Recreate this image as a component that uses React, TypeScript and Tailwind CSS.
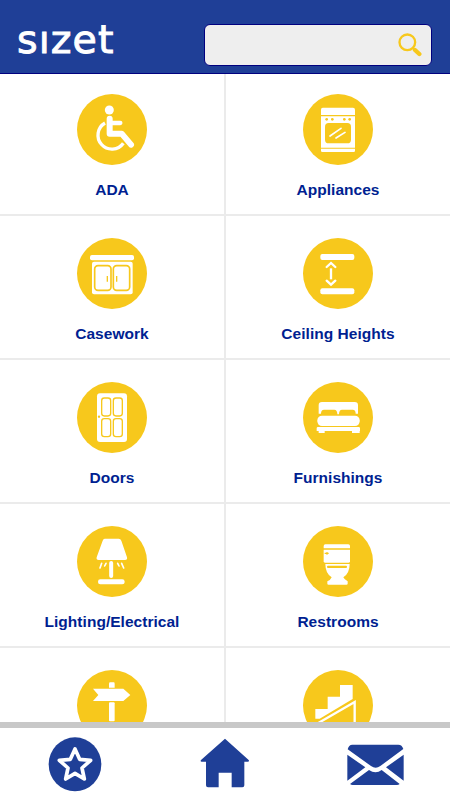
import type { ReactNode } from 'react';

type Category = {
  id: string;
  label?: string;
  icon: ReactNode;
};

const categories: Category[] = [
  {
    id: 'ada',
    label: 'ADA',
    icon: (
      <>
        <circle cx="142" cy="78" r="13.5" fill="#fff" />
        <path d="M143 104v45h36l28 33" fill="none" stroke="#fff" strokeWidth="18" strokeLinecap="round" strokeLinejoin="round" />
        <path d="M145 117h30" stroke="#fff" strokeWidth="13" strokeLinecap="round" />
        <path d="M129 117a42 42 0 1 0 55 61" fill="none" stroke="#fff" strokeWidth="10" />
      </>
    ),
  },
  {
    id: 'appliances',
    label: 'Appliances',
    icon: (
      <>
        <path d="M104 71h91q6 0 6 6v16H99V77q0-6 5-6z" fill="#fff" />
        <path d="M99 97h102v94H99z" fill="#fff" />
        <path d="M99 194h102v6q0 4-4 4h-94q-4 0-4-4z" fill="#fff" />
        <rect x="111" y="117" width="78" height="61" rx="11" fill="#f7c81c" />
        <g fill="#f7c81c">
          <circle cx="116" cy="106" r="4" />
          <circle cx="133" cy="106" r="4" />
          <circle cx="169" cy="106" r="4" />
          <circle cx="185" cy="106" r="4" />
        </g>
        <path d="M126 156l33-23M144 162l27-17" stroke="#fff" strokeWidth="5" strokeLinecap="round" />
      </>
    ),
  },
  {
    id: 'casework',
    label: 'Casework',
    icon: (
      <>
        <rect x="84" y="81" width="132" height="16" rx="6" fill="#fff" />
        <rect x="90" y="101" width="122" height="98" rx="6" fill="#fff" />
        <g fill="none" stroke="#f7c81c" strokeWidth="5">
          <rect x="98" y="113" width="49" height="74" rx="10" />
          <rect x="154" y="113" width="49" height="74" rx="10" />
        </g>
        <path d="M136 144v17M164 144v17" stroke="#f7c81c" strokeWidth="4" />
      </>
    ),
  },
  {
    id: 'ceiling-heights',
    label: 'Ceiling Heights',
    icon: (
      <>
        <rect x="97" y="78" width="102" height="18" rx="6" fill="#fff" />
        <rect x="97" y="181" width="102" height="18" rx="6" fill="#fff" />
        <path d="M129 121v33" stroke="#fff" strokeWidth="7" />
        <path d="M116 117l13-12 13 12M116 158l13 12 13-12" fill="none" stroke="#fff" strokeWidth="7" strokeLinecap="round" />
      </>
    ),
  },
  {
    id: 'doors',
    label: 'Doors',
    icon: (
      <>
        <rect x="105" y="64" width="90" height="146" rx="9" fill="#fff" />
        <g fill="none" stroke="#f7c81c" strokeWidth="4">
          <rect x="119" y="78" width="27" height="54" rx="8" />
          <rect x="154" y="78" width="27" height="54" rx="8" />
          <rect x="119" y="140" width="27" height="54" rx="8" />
          <rect x="154" y="140" width="27" height="54" rx="8" />
        </g>
        <circle cx="111" cy="134" r="3.5" fill="#f7c81c" />
      </>
    ),
  },
  {
    id: 'furnishings',
    label: 'Furnishings',
    icon: (
      <>
        <path
          d="M102 90h98q10 0 10 10v25h-7q0-12-9-12h-32q-9 0-9 14h-5q0-14-9-14h-31q-9 0-9 12h-7v-25q0-10 10-10z"
          fill="#fff"
        />
        <rect x="88" y="131" width="127" height="31" rx="14" fill="#fff" />
        <path d="M90 165h122q4 0 4 4v8h-1v6h-23v-6h-82v6H92v-6h-6v-8q0-4 4-4z" fill="#fff" />
      </>
    ),
  },
  {
    id: 'lighting',
    label: 'Lighting/Electrical',
    icon: (
      <>
        <path d="M128 68h42q6 0 8 6l17 50q2 8-6 8h-79q-8 0-6-8l18-50q2-6 6-6z" fill="#fff" />
        <path d="M147.5 141v39" stroke="#fff" strokeWidth="12" strokeLinecap="round" />
        <path d="M119 142l-5 14M132 142l-4 8M167 142l4 8M179 142l6 14" stroke="#fff" strokeWidth="5" strokeLinecap="round" />
        <rect x="108" y="190" width="80" height="15" rx="7" fill="#fff" />
      </>
    ),
  },
  {
    id: 'restrooms',
    label: 'Restrooms',
    icon: (
      <>
        <path d="M112 85h69q5 0 5 5v7h-79v-7q0-5 5-5z" fill="#fff" />
        <path d="M107 101h79v35q0 4-4 4h-71q-4 0-4-4z" fill="#fff" />
        <path d="M112 144h73q0 28-19 40 3 7 13 12v7q0 3-4 3h-53q-4 0-4-3v-7q10-4 13-12-19-12-19-40z" fill="#fff" />
        <rect x="117" y="149" width="60" height="7" rx="3" fill="#f7c81c" />
        <path d="M110 112h12M117 108v8" stroke="#f7c81c" strokeWidth="3.5" />
      </>
    ),
  },
  {
    id: 'signage',
    icon: (
      <>
        <path d="M145 67h10q3 0 3 4v12h-17V71q0-4 4-4z" fill="#fff" />
        <path d="M93 86h91l21 19-21 18H93l16-18z" fill="#fff" />
        <rect x="141" y="127" width="17" height="57" rx="3" fill="#fff" />
      </>
    ),
  },
  {
    id: 'stairs',
    icon: (
      <>
        <path d="M82 147h37v-37h37V75h38v42L95 176H82z" fill="#fff" />
        <path d="M86 192l114-66v90" fill="none" stroke="#fff" strokeWidth="7" />
      </>
    ),
  },
];

function CategoryCell({ id, label, icon }: Category) {
  return (
    <button
      type="button"
      aria-label={label ?? id}
      className="flex h-36 flex-col items-center border-b-2 border-[#ebebeb] pt-[22px] odd:border-r-2"
    >
      <svg width="70" height="71" viewBox="45 30 210 213" className="block shrink-0">
        <ellipse cx="150" cy="136.5" rx="105" ry="106.5" fill="#f7c81c" />
        {icon}
      </svg>
      {label && (
        <span className="mt-[15px] text-[15.5px] leading-5 font-bold tracking-[0.03px] whitespace-nowrap text-[#001f91]">
          {label}
        </span>
      )}
    </button>
  );
}

function Header() {
  return (
    <header className="flex h-[74px] shrink-0 items-start justify-between border-b border-[#00007f] bg-[#1f3f97] pr-[18px] pl-[17px]">
      <h1 className="mt-4 font-['DejaVu_Sans',sans-serif] text-[39.5px] leading-[47px] tracking-[1.1px] text-white [-webkit-text-stroke:0.9px_white]">
        sızet
      </h1>
      <label className="mt-6 flex h-[42px] w-[228px] items-center rounded-md border border-[#00007f] bg-[#eeeeee]">
        <input type="text" aria-label="Search" className="min-w-0 flex-1 bg-transparent px-3 outline-none" />
        <svg width="24" height="24" viewBox="0 0 72 72" className="mr-[9px] shrink-0">
          <circle cx="28" cy="28" r="23.5" fill="none" stroke="#f7c81c" strokeWidth="7" />
          <path d="M51 51l13 12" stroke="#f7c81c" strokeWidth="13" strokeLinecap="round" />
          <path d="M45 45l7 7" stroke="#f7c81c" strokeWidth="3" />
        </svg>
      </label>
    </header>
  );
}

function BottomNav() {
  return (
    <nav className="flex h-[78px] shrink-0 items-start border-t-6 border-[#c8c8c8] bg-white">
      <button type="button" aria-label="Favorites" className="flex w-[150px] justify-center pt-[9px]">
        <svg width="54" height="55" viewBox="0 0 162 165">
          <ellipse cx="81" cy="82" rx="79" ry="81" fill="#1f3f97" />
          <path
            d="M81 36l14 31 33 3-26 23 7 33-28-17-28 17 7-33-26-23 33-3z"
            fill="none"
            stroke="#fff"
            strokeWidth="11"
            strokeLinejoin="round"
          />
        </svg>
      </button>
      <button type="button" aria-label="Home" className="flex w-[150px] justify-center pt-[9px]">
        <svg width="50" height="52" viewBox="0 0 150 156">
          <path
            d="M75 5l71 64q3 5-3 5h-10v71q0 6-6 6H95v-44H56v44H24q-6 0-6-6V74H5q-5 0-2-5z"
            fill="#1f3f97"
          />
        </svg>
      </button>
      <button type="button" aria-label="Mail" className="flex w-[150px] justify-center pt-4">
        <svg width="58" height="42" viewBox="0 0 174 126">
          <path d="M5 16Q8 2 19 2h138q11 0 15 13l-69 51q-14 10-28 0z" fill="#1f3f97" />
          <path
            d="M4 32l54 38-54 40zM173 32l-53 38 53 40zM12 120l57-42q20 14 38 0l54 42q-4 3-8 3H20q-4 0-8-3z"
            fill="#1f3f97"
          />
        </svg>
      </button>
    </nav>
  );
}

export default function App() {
  return (
    <div className="flex h-[800px] w-[450px] flex-col overflow-hidden bg-white font-['Liberation_Sans',Arial,sans-serif]">
      <Header />
      <main className="min-h-0 flex-1 overflow-hidden">
        <div className="-mt-0.5 grid grid-cols-[226px_224px]">
          {categories.map((category) => (
            <CategoryCell key={category.id} {...category} />
          ))}
        </div>
      </main>
      <BottomNav />
    </div>
  );
}
